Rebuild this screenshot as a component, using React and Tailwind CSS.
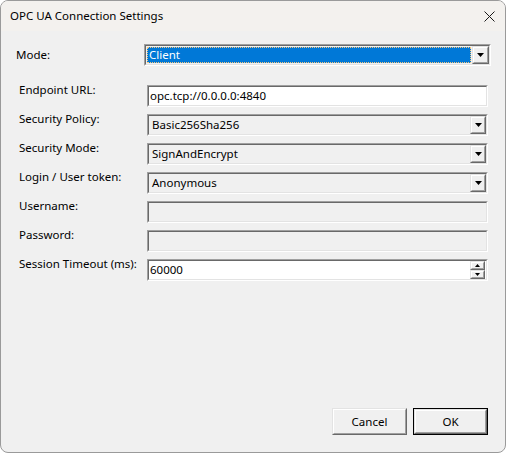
import React from 'react';

const font = { fontFamily: '"Noto Sans", "Liberation Sans", sans-serif' };

const Sunken = ({ className = '', children }) => (
  <div className={`border border-t-[#a0a0a0] border-l-[#a0a0a0] border-b-white border-r-white ${className}`}>
    <div className="h-full border border-t-[#696969] border-l-[#696969] border-b-[#e3e3e3] border-r-[#e3e3e3] flex items-center">
      {children}
    </div>
  </div>
);

const Raised = ({ className = '', children }) => (
  <div className={`border border-t-[#e3e3e3] border-l-[#e3e3e3] border-b-[#696969] border-r-[#696969] ${className}`}>
    <div className="h-full border border-t-white border-l-white border-b-[#a0a0a0] border-r-[#a0a0a0] bg-[#f0f0f0] flex items-center justify-center">
      {children}
    </div>
  </div>
);

const Arrow = ({ up = false, small = false }) => (
  <svg width={small ? 5 : 7} height={small ? 3 : 4} viewBox={small ? '0 0 5 3' : '0 0 7 4'}>
    {small ? (
      <polygon points={up ? '2.5,0 5,3 0,3' : '0,0 5,0 2.5,3'} fill="#000" />
    ) : (
      <polygon points="0,0 7,0 3.5,4" fill="#000" />
    )}
  </svg>
);

const Combo = ({ value }) => (
  <Sunken className="w-[341px] h-[22px]">
    <span className="flex-1 pl-[3px] text-[11.5px] leading-[16px] text-black">{value}</span>
    <Raised className="w-[16px] h-[18px]">
      <Arrow />
    </Raised>
  </Sunken>
);

const Row = ({ label, children }) => (
  <div className="flex h-[22px]">
    <span className="w-[131px] shrink-0 pl-[3px] -mt-[3px] whitespace-nowrap text-[11.5px] leading-[16px] text-black">{label}</span>
    {children}
  </div>
);

export default function App() {
  return (
    <div style={font} className="w-[506px] h-[453px] flex flex-col border border-[#9a9a9a] rounded-[8px] overflow-hidden bg-[#f0f0f0]">
      <div className="h-[30px] bg-[#f3f1ee] flex items-center justify-between pl-[9px] pr-[10px]">
        <span className="text-[11.5px] text-black">OPC UA Connection Settings</span>
        <svg width="11" height="11" viewBox="0 0 11 11">
          <path d="M0.5 0.5 L10.5 10.5 M10.5 0.5 L0.5 10.5" stroke="#1a1a1a" strokeWidth="1" />
        </svg>
      </div>

      <div className="flex-1 flex flex-col pt-[13px] pl-[15px] pr-[14px] pb-[17px]">
        {/* Mode */}
        <div className="flex h-[22px] items-center">
          <span className="w-[128px] shrink-0 text-[11.5px] leading-[16px] text-black">Mode:</span>
          <Sunken className="w-[347px] h-[22px] shrink-0">
            <div className="flex-1 h-full p-[1px]">
              <div className="h-full bg-[#0078d7] border border-dotted border-[#f5c77e] flex items-center pl-[1px] text-[11.5px] leading-[16px] text-white">
                Client
              </div>
            </div>
            <Raised className="w-[17px] h-[18px]">
              <Arrow />
            </Raised>
          </Sunken>
        </div>

        <div className="flex flex-col gap-[7px] mt-[19px]">
          <Row label="Endpoint URL:">
            <Sunken className="w-[341px] h-[22px] bg-white">
              <span className="pl-[1px] text-[11.5px] leading-[16px] text-black">opc.tcp://0.0.0.0:4840</span>
            </Sunken>
          </Row>
          <Row label="Security Policy:">
            <Combo value="Basic256Sha256" />
          </Row>
          <Row label="Security Mode:">
            <Combo value="SignAndEncrypt" />
          </Row>
          <Row label="Login / User token:">
            <Combo value="Anonymous" />
          </Row>
          <Row label="Username:">
            <Sunken className="w-[341px] h-[22px] bg-[#f0f0f0]" />
          </Row>
          <Row label="Password:">
            <Sunken className="w-[341px] h-[22px] bg-[#f0f0f0]" />
          </Row>
          <Row label="Session Timeout (ms):">
            <Sunken className="w-[341px] h-[22px] bg-white">
              <span className="flex-1 pl-[1px] text-[11.5px] leading-[16px] text-black">60000</span>
              <div className="flex flex-col mr-[1px]">
                <Raised className="w-[15px] h-[9px]">
                  <Arrow up small />
                </Raised>
                <Raised className="w-[15px] h-[9px]">
                  <Arrow small />
                </Raised>
              </div>
            </Sunken>
          </Row>
        </div>

        <div className="mt-auto mr-[3px] flex justify-end gap-[6px]">
          <Raised className="w-[75px] h-[27px]">
            <span className="text-[11.5px] text-black">Cancel</span>
          </Raised>
          <div className="border border-black w-[75px] h-[27px]">
            <Raised className="h-full">
              <span className="text-[11.5px] text-black">OK</span>
            </Raised>
          </div>
        </div>
      </div>
    </div>
  );
}
